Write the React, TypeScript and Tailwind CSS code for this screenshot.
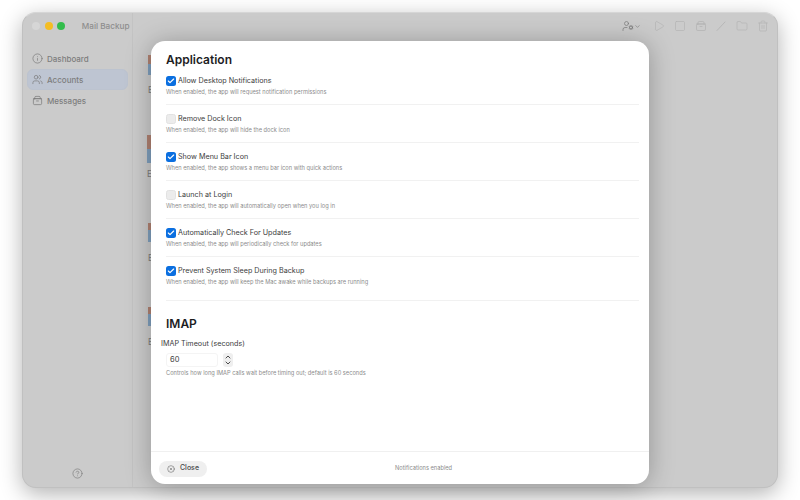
import { ChevronDown, ChevronUp, CircleHelp, CircleX, Folder, Info, Play, Square, Trash2, UserCog, Users, Check } from "lucide-react"

function TrayIcon({ className }: { className?: string }) {
  return (
    <svg viewBox="0 0 24 24" fill="none" stroke="currentColor" strokeWidth={1.6} strokeLinecap="round" className={className}>
      <rect x="3" y="8" width="18" height="13" rx="2.5" />
      <path d="M6 8V5.5A2.5 2.5 0 0 1 8.5 3h7A2.5 2.5 0 0 1 18 5.5V8" />
      <path d="M3 8h18" />
      <path d="M10 13h4" />
    </svg>
  )
}

function SlashPenIcon({ className }: { className?: string }) {
  return (
    <svg viewBox="0 0 24 24" fill="none" stroke="currentColor" strokeWidth={1.8} strokeLinecap="round" className={className}>
      <path d="M4 21 20 4" />
    </svg>
  )
}

const settings = [
  { label: "Allow Desktop Notifications", help: "When enabled, the app will request notification permissions", on: true },
  { label: "Remove Dock Icon", help: "When enabled, the app will hide the dock icon", on: false },
  { label: "Show Menu Bar Icon", help: "When enabled, the app shows a menu bar icon with quick actions", on: true },
  { label: "Launch at Login", help: "When enabled, the app will automatically open when you log in", on: false },
  { label: "Automatically Check For Updates", help: "When enabled, the app will periodically check for updates", on: true },
  { label: "Prevent System Sleep During Backup", help: "When enabled, the app will keep the Mac awake while backups are running", on: true },
]

const navItems = [
  { label: "Dashboard", icon: Info, active: false },
  { label: "Accounts", icon: Users, active: true },
  { label: "Messages", icon: TrayIcon, active: false },
]

const toolIcons = [Play, Square, TrayIcon, SlashPenIcon, Folder, Trash2]

const accountCards = [
  { slot: "h-[57px]", top: "h-[9px]", bottom: "h-[11px]", gap: "mb-[9px]", left: "ml-[15px]" },
  { slot: "h-[84px]", top: "h-[14px]", bottom: "h-[14px]", gap: "mb-[5px]", left: "ml-[14px]" },
  { slot: "h-[84px]", top: "h-[7px]", bottom: "h-[12px]", gap: "mb-[10px]", left: "ml-[15px]" },
  { slot: "h-[84px]", top: "h-[7px]", bottom: "h-[12px]", gap: "mb-[10px]", left: "ml-[15px]" },
]

export default function App() {
  return (
    <div className="relative h-[500px] w-[800px] overflow-hidden bg-white pl-[22px] pt-[12px] font-['Inter',sans-serif]">
      {/* Window behind the sheet */}
      <div className="flex h-[476px] w-[756px] flex-col overflow-hidden rounded-[14px] border border-[#c0c0c0] border-t-[#d6d6d6] bg-[#cbcbcb] shadow-[0_6px_22px_rgba(0,0,0,0.3)]">
        <div className="flex min-h-0 flex-1">
          {/* Sidebar */}
          <aside className="flex w-[110px] shrink-0 flex-col border-r border-[#c3c3c3] px-[4px]">
            <div className="flex h-[26px] items-center gap-[4.6px] pl-[5px]">
              <span className="h-[8px] w-[8px] shrink-0 rounded-full bg-[#d6d6d6]" />
              <span className="h-[8px] w-[8px] shrink-0 rounded-full bg-[#f4bd23]" />
              <span className="h-[8px] w-[8px] shrink-0 rounded-full bg-[#33bd4c]" />
              <span className="ml-[12px] shrink-0 whitespace-nowrap text-[8.2px] font-medium text-[#8e8e8e]">Mail Backup</span>
            </div>
            <nav className="mt-[9px] flex flex-col">
              {navItems.map((item) => {
                const Icon = item.icon
                return (
                  <div
                    key={item.label}
                    className={`flex h-[21px] items-center gap-[4px] rounded-[6px] border pl-[4px] text-[8px] font-medium text-[#7d7d7d] ${
                      item.active ? "border-[#bcc3cf] bg-[#bec5d2]" : "border-transparent"
                    }`}
                  >
                    <Icon className="h-[11px] w-[11px] text-[#7b7b7b]" strokeWidth={1.5} />
                    <span>{item.label}</span>
                  </div>
                )
              })}
            </nav>
            <div className="mt-auto mb-[8px] flex justify-center">
              <CircleHelp className="h-[11px] w-[11px] text-[#7f7f7f]" strokeWidth={1.5} />
            </div>
          </aside>

          {/* Main pane */}
          <main className="min-w-0 flex-1">
            <div className="flex h-[26px] items-center pl-[489px]">
              <UserCog className="h-[12px] w-[12px] text-[#7b7b7b]" strokeWidth={1.4} />
              <ChevronDown className="h-[7px] w-[7px] text-[#7b7b7b]" strokeWidth={2} />
              <div className="ml-[12px] flex items-center gap-[8.8px]">
                {toolIcons.map((Icon, i) => (
                  <Icon key={i} className="h-[12px] w-[12px] text-[#b4b4b4]" strokeWidth={1.4} />
                ))}
              </div>
            </div>
            <div className="flex flex-col">
              {accountCards.map((card, i) => (
                <div key={i} className={`flex flex-col justify-end ${card.slot} ${card.left}`}>
                  <div className={`${card.top} w-[6px] bg-[#b08272]`} />
                  <div className={`${card.bottom} ${card.gap} w-[6px] bg-[#7f9fbd]`} />
                  <div className="text-[8.5px] leading-[12px] text-[#7b7b7b]">E</div>
                </div>
              ))}
            </div>
          </main>
        </div>
      </div>

      {/* Settings sheet */}
      <div className="absolute left-[151px] top-[41px] flex h-[443px] w-[498px] flex-col rounded-[14px] bg-white shadow-[0_2px_26px_rgba(0,0,0,0.28)]">
        <div className="min-h-0 flex-1 pl-[15px] pr-[10px]">
          <h2 className="pt-[10px] text-[12px] font-semibold leading-[18px] text-[#1d1d1f]">Application</h2>
          <div className="-mt-[2px] flex flex-col">
            {settings.map((row, i) => (
              <div key={row.label} className={`h-[38px] pt-[8px] ${i < 5 ? "border-b border-[#f1f1f1]" : ""}`}>
                <div className="flex h-[12px] items-center gap-[2.5px]">
                  {row.on ? (
                    <span className="flex h-[9.5px] w-[9.5px] items-center justify-center rounded-[2.5px] bg-[#0b6fe0]">
                      <Check className="h-[8px] w-[8px] text-white" strokeWidth={3.5} />
                    </span>
                  ) : (
                    <span className="h-[9.5px] w-[9.5px] rounded-[2.5px] border border-[#e2e2e2] bg-[#ececec]" />
                  )}
                  <span className="text-[7.2px] leading-[12px] text-[#3c3c3c]">{row.label}</span>
                </div>
                <p className="mt-[1px] text-[5.7px] leading-[8px] text-[#8c8c8c]">{row.help}</p>
              </div>
            ))}
          </div>
          <div className="mt-[5px] border-t border-[#f1f1f1]" />
          <h2 className="mt-[14px] text-[12px] font-semibold leading-[18px] text-[#1d1d1f]">IMAP</h2>
          <label className="-ml-[5px] mt-[5px] block text-[7.2px] leading-[12px] text-[#3c3c3c]">IMAP Timeout (seconds)</label>
          <div className="mt-[3px] flex items-center gap-[5px]">
            <div className="flex h-[14px] w-[52px] items-center rounded-[3px] border border-[#f4f4f4] pl-[3px] text-[7.5px] text-[#3c3c3c]">60</div>
            <div className="flex h-[14px] w-[10px] flex-col items-center justify-center rounded-[3px] bg-[#efefef]">
              <ChevronUp className="-mb-[1px] h-[8px] w-[8px] text-[#333]" strokeWidth={2.6} />
              <ChevronDown className="-mt-[1px] h-[8px] w-[8px] text-[#333]" strokeWidth={2.6} />
            </div>
          </div>
          <p className="mt-[2px] text-[5.7px] leading-[8px] text-[#8c8c8c]">Controls how long IMAP calls wait before timing out; default is 60 seconds</p>
        </div>

        {/* Footer */}
        <div className="relative flex h-[33px] shrink-0 items-center border-t border-[#f0f0f0] pl-[8px] pt-[1px]">
          <button className="flex h-[16px] w-[48px] items-center justify-center gap-[5px] rounded-full bg-[#efefef] text-[7px] font-medium text-[#4a4a4a]">
            <CircleX className="h-[8px] w-[8px] text-[#5a5a5a]" strokeWidth={1.6} />
            Close
          </button>
          <span className="absolute left-[244px] text-[5.7px] text-[#8c8c8c]">Notifications enabled</span>
        </div>
      </div>
    </div>
  )
}
